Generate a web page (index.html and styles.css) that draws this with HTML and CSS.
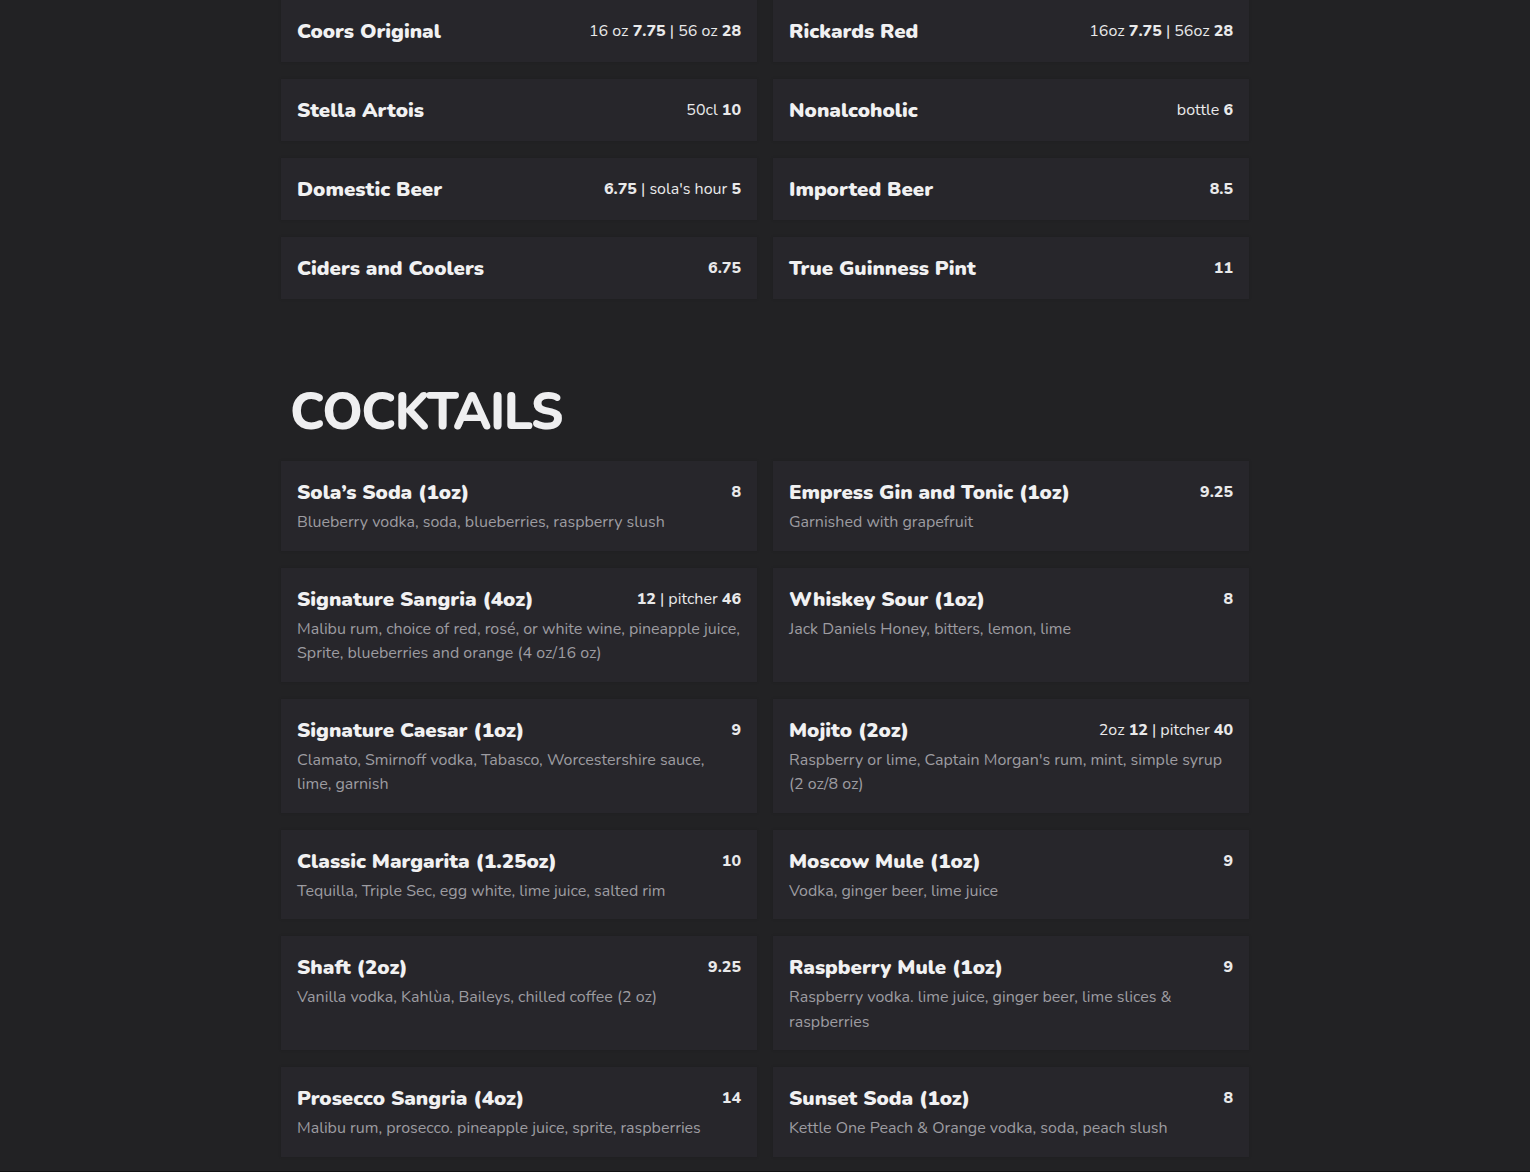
FILE: index.html
```html
<!DOCTYPE html>
<html lang="en">
<head>
<meta charset="utf-8">
<title>Menu</title>
<link rel="stylesheet" href="styles.css">
</head>
<body>
<main class="menu">
  <section class="section section-beer">
    <div class="grid">
      <div class="card"><div class="row"><h3 class="name">Coors Original</h3><div class="price">16 oz <b>7.75</b> | 56 oz <b>28</b></div></div></div>
      <div class="card"><div class="row"><h3 class="name">Rickards Red</h3><div class="price">16oz <b>7.75</b> | 56oz <b>28</b></div></div></div>
      <div class="card"><div class="row"><h3 class="name">Stella Artois</h3><div class="price">50cl <b>10</b></div></div></div>
      <div class="card"><div class="row"><h3 class="name">Nonalcoholic</h3><div class="price">bottle <b>6</b></div></div></div>
      <div class="card"><div class="row"><h3 class="name">Domestic Beer</h3><div class="price"><b>6.75</b> | sola's hour <b>5</b></div></div></div>
      <div class="card"><div class="row"><h3 class="name">Imported Beer</h3><div class="price"><b>8.5</b></div></div></div>
      <div class="card"><div class="row"><h3 class="name">Ciders and Coolers</h3><div class="price"><b>6.75</b></div></div></div>
      <div class="card"><div class="row"><h3 class="name">True Guinness Pint</h3><div class="price"><b>11</b></div></div></div>
    </div>
  </section>

  <section class="section section-cocktails">
    <h2 class="section-title">COCKTAILS</h2>
    <div class="grid">
      <div class="card"><div class="row"><h3 class="name">Sola’s Soda (1oz)</h3><div class="price"><b>8</b></div></div><p class="desc">Blueberry vodka, soda, blueberries, raspberry slush</p></div>
      <div class="card"><div class="row"><h3 class="name">Empress Gin and Tonic (1oz)</h3><div class="price"><b>9.25</b></div></div><p class="desc">Garnished with grapefruit</p></div>
      <div class="card"><div class="row"><h3 class="name">Signature Sangria (4oz)</h3><div class="price"><b>12</b> | pitcher <b>46</b></div></div><p class="desc">Malibu rum, choice of red, rosé, or white wine, pineapple juice, Sprite, blueberries and orange (4 oz/16 oz)</p></div>
      <div class="card"><div class="row"><h3 class="name">Whiskey Sour (1oz)</h3><div class="price"><b>8</b></div></div><p class="desc">Jack Daniels Honey, bitters, lemon, lime</p></div>
      <div class="card"><div class="row"><h3 class="name">Signature Caesar (1oz)</h3><div class="price"><b>9</b></div></div><p class="desc">Clamato, Smirnoff vodka, Tabasco, Worcestershire sauce, lime, garnish</p></div>
      <div class="card"><div class="row"><h3 class="name">Mojito (2oz)</h3><div class="price">2oz <b>12</b> | pitcher <b>40</b></div></div><p class="desc">Raspberry or lime, Captain Morgan's rum, mint, simple syrup (2 oz/8 oz)</p></div>
      <div class="card"><div class="row"><h3 class="name">Classic Margarita (1.25oz)</h3><div class="price"><b>10</b></div></div><p class="desc">Tequilla, Triple Sec, egg white, lime juice, salted rim</p></div>
      <div class="card"><div class="row"><h3 class="name">Moscow Mule (1oz)</h3><div class="price"><b>9</b></div></div><p class="desc">Vodka, ginger beer, lime juice</p></div>
      <div class="card"><div class="row"><h3 class="name">Shaft (2oz)</h3><div class="price"><b>9.25</b></div></div><p class="desc">Vanilla vodka, Kahlùa, Baileys, chilled coffee (2 oz)</p></div>
      <div class="card"><div class="row"><h3 class="name">Raspberry Mule (1oz)</h3><div class="price"><b>9</b></div></div><p class="desc">Raspberry vodka. lime juice, ginger beer, lime slices &amp; raspberries</p></div>
      <div class="card"><div class="row"><h3 class="name">Prosecco Sangria (4oz)</h3><div class="price"><b>14</b></div></div><p class="desc">Malibu rum, prosecco. pineapple juice, sprite, raspberries</p></div>
      <div class="card"><div class="row"><h3 class="name">Sunset Soda (1oz)</h3><div class="price"><b>8</b></div></div><p class="desc">Kettle One Peach &amp; Orange vodka, soda, peach slush</p></div>
    </div>
  </section>
</main>
<footer class="footer"></footer>
</body>
</html>
```

FILE: styles.css
```css
html, body {
  margin: 0;
  padding: 0;
  background: #222224;
}
body {
  font-family: "Nunito", "Open Sans", "Liberation Sans", sans-serif;
  color: #efeff0;
}
.menu {
  width: 968px;
  margin: 0 auto;
}
.grid {
  display: grid;
  grid-template-columns: 1fr 1fr;
  column-gap: 16px;
  row-gap: 17px;
  align-items: stretch;
}
.card {
  background: #27262b;
  padding: 16px;
  box-shadow: 0 0 3px rgba(0, 0, 0, 0.15);
}
.row {
  display: flex;
  justify-content: space-between;
  align-items: flex-start;
  gap: 12px;
}
.name {
  margin: 0;
  font-size: 20.5px;
  font-weight: 900;
  line-height: 30px;
  color: #f1f1f2;
}
.price {
  font-size: 16px;
  line-height: 30px;
  color: #e9e9ea;
  white-space: nowrap;
}
.price b {
  font-weight: 800;
}
.desc {
  margin: 3px 0 0 0;
  font-size: 16px;
  line-height: 24.5px;
  color: #9d9ca1;
}
.section-cocktails {
  margin-top: 81px;
}
.section-title {
  margin: 0 0 17px 9px;
  font-size: 51px;
  line-height: 64px;
  font-weight: 800;
  letter-spacing: -1.5px;
  color: #efeff0;
}
.footer {
  margin-top: 14px;
  height: 30px;
  background: #111112;
}
```
